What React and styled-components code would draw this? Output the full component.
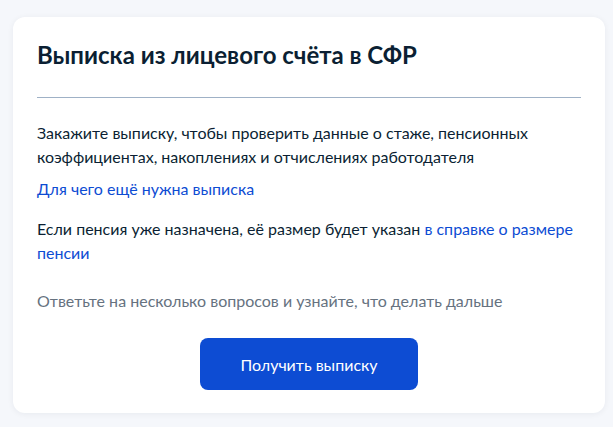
import React from "react";
import styled, { createGlobalStyle } from "styled-components";

const Global = createGlobalStyle`
  html, body { margin: 0; padding: 0; }
  body {
    background: #f5f7fb;
    font-family: Lato, "Noto Sans", sans-serif;
    color: #0b1f33;
  }
`;

const Page = styled.div`
  padding: 17px 8px 14px 13px;
`;

const Card = styled.section`
  width: 592px;
  box-sizing: border-box;
  background: #ffffff;
  border-radius: 12px;
  box-shadow: 0 1px 6px rgba(11, 31, 51, 0.06);
  padding: 22px 24px 23px;
  display: flex;
  flex-direction: column;
`;

const Title = styled.h1`
  margin: 0;
  font-size: 24px;
  line-height: 32px;
  font-weight: 700;
  color: #0b1f33;
`;

const Divider = styled.hr`
  border: 0;
  height: 1px;
  background: #9fb1c6;
  margin: 26px 0 23px;
`;

const Text = styled.p`
  margin: ${(p) => p.$mt || 0}px 0 0;
  font-size: 16px;
  line-height: 24px;
  color: ${(p) => (p.$muted ? "#66727f" : "#0b1f33")};
`;

const Link = styled.a`
  color: #0d4cd3;
  text-decoration: none;
  cursor: pointer;
`;

const Actions = styled.div`
  display: flex;
  justify-content: center;
  margin-top: 25px;
`;

const Button = styled.button`
  width: 218px;
  height: 52px;
  border: 0;
  border-radius: 8px;
  background: #0d4cd3;
  color: #ffffff;
  font-family: Lato, "Noto Sans", sans-serif;
  font-size: 16px;
  cursor: pointer;
`;

export default function App() {
  return (
    <>
      <Global />
      <Page>
        <Card>
          <Title>Выписка из лицевого счёта в СФР</Title>
          <Divider />
          <Text>
            Закажите выписку, чтобы проверить данные о стаже, пенсионных
            коэффициентах, накоплениях и отчислениях работодателя
          </Text>
          <Text $mt={8}>
            <Link>Для чего ещё нужна выписка</Link>
          </Text>
          <Text $mt={16}>
            Если пенсия уже назначена, её размер будет указан{" "}
            <Link>в справке о размере пенсии</Link>
          </Text>
          <Text $mt={24} $muted>
            Ответьте на несколько вопросов и узнайте, что делать дальше
          </Text>
          <Actions>
            <Button>Получить выписку</Button>
          </Actions>
        </Card>
      </Page>
    </>
  );
}
